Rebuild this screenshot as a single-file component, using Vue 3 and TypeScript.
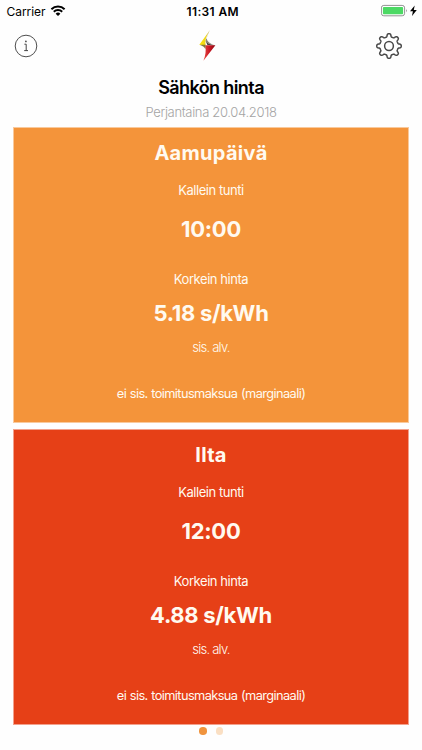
<script setup lang="ts">
interface PriceCard {
  id: string
  title: string
  hour: string
  price: string
}

const cards: PriceCard[] = [
  { id: 'morning', title: 'Aamupäivä', hour: '10:00', price: '5.18 s/kWh' },
  { id: 'evening', title: 'Ilta', hour: '12:00', price: '4.88 s/kWh' },
]

// Outline of an eight-toothed cog with softened corners
function cogPath(cx: number, cy: number): string {
  const steps = 240
  const points: string[] = []
  for (let i = 0; i < steps; i++) {
    const a = (i / steps) * Math.PI * 2
    const r = 10.75 + 1.55 * Math.tanh(2.2 * Math.cos(8 * a) - 0.3)
    points.push(`${(cx + r * Math.sin(a)).toFixed(2)} ${(cy - r * Math.cos(a)).toFixed(2)}`)
  }
  return `M${points.join('L')}Z`
}

const cog = cogPath(14, 14)
</script>

<template>
  <main class="screen">
    <div class="status">
      <div class="status-left">
        <span class="carrier">Carrier</span>
        <svg class="wifi" width="16" height="12" viewBox="0 0 16 12">
          <path d="M1.4 4.3A9.4 9.4 0 0 1 14.6 4.3" />
          <path d="M3.8 6.8A6 6 0 0 1 12.2 6.8" />
          <path class="solid" d="M5.6 8.7A3.4 3.4 0 0 1 10.4 8.7L8 11.1Z" />
        </svg>
      </div>
      <span class="clock">11:31 AM</span>
      <div class="status-right">
        <svg width="38" height="14" viewBox="0 0 38 14">
          <rect x="0.4" y="1.4" width="23.2" height="10.4" rx="2.4" fill="#fff" stroke="#777" stroke-width="0.8" />
          <rect x="1.9" y="2.9" width="20.2" height="7.4" rx="1" fill="#4cd964" />
          <path d="M25 4.9Q26.5 6.6 25 8.3Z" fill="#777" />
          <path d="M33.7 1.6L29 7.3H31.9L31 12L35.8 6H32.8Z" fill="#000" />
        </svg>
      </div>
    </div>

    <header class="bar">
      <svg width="24" height="24" viewBox="0 0 24 24" aria-label="info">
        <circle cx="12" cy="12" r="10.8" fill="none" stroke="#444" stroke-width="0.95" />
        <circle cx="11.9" cy="7.4" r="0.85" fill="#444" />
        <path d="M10.4 10.2H12.2V16.5M10.2 16.6H14" fill="none" stroke="#444" stroke-width="1" />
      </svg>
      <svg class="logo" width="20" height="32" viewBox="0 0 20 32">
        <defs>
          <linearGradient id="gold" x1="0" y1="0" x2="1" y2="0">
            <stop offset="0" stop-color="#ffe800" />
            <stop offset="0.6" stop-color="#eed51c" />
            <stop offset="1" stop-color="#cdb850" />
          </linearGradient>
          <linearGradient id="ruby" x1="0" y1="0" x2="1" y2="0">
            <stop offset="0" stop-color="#e84a42" />
            <stop offset="0.5" stop-color="#ca1724" />
            <stop offset="1" stop-color="#8c0710" />
          </linearGradient>
        </defs>
        <path d="M11.5 0.5Q8.8 6 8.6 8.5Q9.4 12.5 16 15Q9.5 14.2 7.4 11Z" fill="#8c8878" />
        <path d="M12 0L1.3 14.7L7.6 15.3Q6.1 9.5 12 0Z" fill="url(#gold)" />
        <path d="M1.5 14.7Q6.8 16.4 7.3 19.5Q8.1 17 7.6 14.8Z" fill="#81793f" />
        <path d="M7.6 11Q9.6 14.4 17 15.6L9.4 15.1Z" fill="#45413c" />
        <path d="M17.4 15.3L5.4 30.8Q8.6 23 7.4 15.2Z" fill="url(#ruby)" />
      </svg>
      <svg width="28" height="28" viewBox="0 0 28 28" aria-label="settings">
        <path :d="cog" fill="none" stroke="#484848" stroke-width="1.5" stroke-linejoin="round" />
        <circle cx="14" cy="14" r="4.4" fill="none" stroke="#484848" stroke-width="1.5" />
      </svg>
    </header>

    <h1 class="title">Sähkön hinta</h1>
    <p class="date">Perjantaina 20.04.2018</p>

    <div class="cards">
      <section v-for="card in cards" :key="card.id" class="card" :class="card.id">
        <h2 class="period">{{ card.title }}</h2>
        <p class="label">Kallein tunti</p>
        <p class="value hour">{{ card.hour }}</p>
        <p class="label">Korkein hinta</p>
        <p class="value price">{{ card.price }}</p>
        <p class="tax">sis. alv.</p>
        <p class="note">ei sis. toimitusmaksua (marginaali)</p>
      </section>
    </div>

    <div class="dots">
      <span class="dot active"></span>
      <span class="dot"></span>
    </div>
  </main>
</template>

<style>
body {
  background: #fefefe;
}
</style>

<style scoped>
.screen {
  width: 422px;
  height: 750px;
  overflow: hidden;
  background: #fefefe;
  font-family: Inter, "Liberation Sans", sans-serif;
  color: #000;
}
h1, h2, p {
  margin: 0;
  text-align: center;
  white-space: nowrap;
}
svg {
  display: block;
  flex: none;
}
.status {
  display: grid;
  grid-template-columns: 1fr auto 1fr;
  align-items: center;
  height: 22px;
  padding: 0 3px 0 6.5px;
}
.status-left {
  display: flex;
  align-items: center;
  gap: 4.5px;
}
.carrier {
  font-size: 12px;
  letter-spacing: -0.05px;
}
.wifi {
  fill: none;
  stroke: #000;
  stroke-width: 2;
}
.wifi .solid {
  fill: #000;
  stroke: none;
}
.clock {
  font-size: 12px;
  font-weight: 600;
  letter-spacing: 0.35px;
}
.status-right {
  display: flex;
  justify-content: flex-end;
}
.bar {
  display: flex;
  align-items: center;
  justify-content: space-between;
  height: 48px;
  padding: 0 19.5px 0 14px;
}
.logo {
  margin-left: 3px;
}
.title {
  height: 36px;
  line-height: 36px;
  font-size: 18px;
  font-weight: 600;
  letter-spacing: -0.6px;
}
.date {
  height: 21px;
  line-height: 13px;
  font-size: 13px;
  font-weight: 300;
  letter-spacing: -0.33px;
  color: #a4a4a4;
}
.cards {
  display: flex;
  flex-direction: column;
  gap: 6px;
  padding: 0 13px;
}
.card {
  box-sizing: border-box;
  height: 296px;
  overflow: hidden;
  border: 1px solid;
  color: #fffaf0;
}
.morning {
  background: #f4943a;
  border-color: #f9c99c;
}
.evening {
  background: #e64017;
  border-color: #f3a08c;
}
.period {
  height: 50px;
  line-height: 50px;
  font-size: 20px;
  font-weight: 700;
  letter-spacing: 0.3px;
}
.label {
  height: 24px;
  line-height: 24px;
  font-size: 13px;
  letter-spacing: -0.45px;
}
.value {
  font-size: 22px;
  font-weight: 700;
  letter-spacing: -0.3px;
}
.hour {
  height: 65px;
  line-height: 54px;
}
.price {
  height: 44px;
  line-height: 44px;
}
.tax {
  height: 24px;
  line-height: 24px;
  font-size: 13px;
  font-weight: 300;
  letter-spacing: -0.75px;
}
.note {
  height: 70px;
  line-height: 70px;
  font-size: 12.8px;
  letter-spacing: -0.6px;
  word-spacing: 0.6px;
}
.dots {
  display: flex;
  justify-content: center;
  gap: 9px;
  padding-top: 2px;
}
.dot {
  width: 7.5px;
  height: 7.5px;
  border-radius: 50%;
  background: #fadfc3;
}
.dot.active {
  background: #f0943e;
}
</style>
